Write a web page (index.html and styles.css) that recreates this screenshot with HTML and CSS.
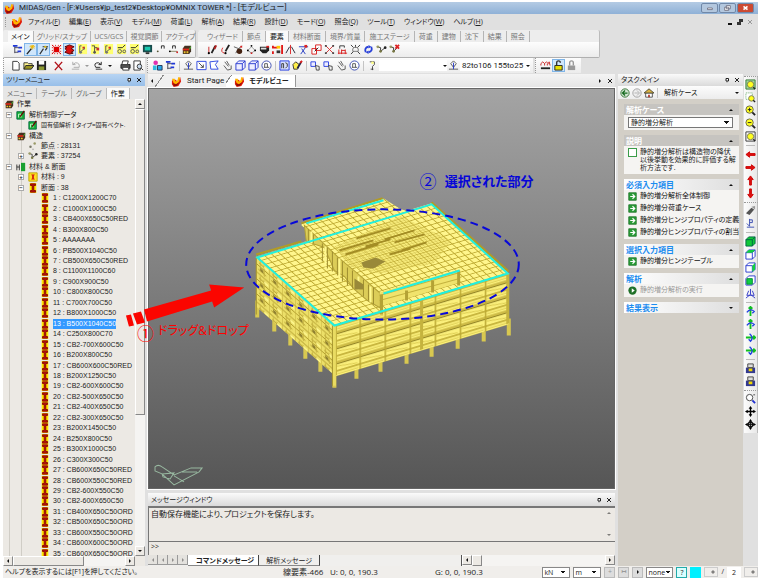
FILE: index.html
```html
<!DOCTYPE html>
<html lang="ja">
<head>
  <meta charset="UTF-8">
  <meta name="viewport" content="width=device-width, initial-scale=1.0">
  <title>MIDAS/Gen</title>
  <link rel="stylesheet" href="styles.css">
</head>
<body>

<svg class="sprite" aria-hidden="true">
  <symbol id="logo" viewBox="0 0 12 12"><path d="M1 5l4-1 2 2 3-5 1 5-3 5-5 1-2-3z" fill="#e01808"/><path d="M1 3l3 0 1 3 2-1 1-4 2 1-1 4-3 3-3-1z" fill="#ffb400"/><path d="M2 8l3 1 4-2-3 4H3z" fill="#901008"/></symbol>
  <symbol id="tree" viewBox="0 0 12 12"><path d="M3 2v8M3 4h5M3 9h4" stroke="#445" fill="none"/><path d="M1 1h5v2H1zM7 3h4v2H7zM6 7h4v2H6z" fill="#2038d8"/></symbol>
  <symbol id="wand" viewBox="0 0 12 12"><path d="M2 11l5-6" stroke="#222" stroke-width="1.5"/><path d="M8 1v5M5 3h6M6 1l4 4M10 1L6 5" stroke="#f0b800"/></symbol>
  <symbol id="wand2" viewBox="0 0 12 12"><path d="M2 11l4-6M8 7l2-3M5 3h6" stroke="#333" stroke-width="1.3"/><path d="M7 2h2v2H7z" fill="#e8c000"/></symbol>
  <symbol id="select" viewBox="0 0 12 12"><path d="M3 3h6v6H3z" fill="#d00"/><path d="M1 1l2 2M11 1L9 3M1 11l2-2M11 11L9 9" stroke="#d00"/><path d="M1.500 1.500h9v9h-9z" fill="none" stroke="#d00" stroke-dasharray="1 2"/></symbol>
  <symbol id="stack" viewBox="0 0 12 12"><path d="M1 3l5-2 5 2-3 2 3 2-3 2 2 1-4 1-5-2 2-2-2-2 2-1z" fill="#d81010" stroke="#500"/></symbol>
  <symbol id="node-y" viewBox="0 0 12 12"><path d="M1 0h10v11H1z" fill="#ffff70"/><path d="M3 2v7l5-4M3 2l2 0M8 3v3" stroke="#555" fill="none"/><path d="M6 3h2v2H6z" fill="#d22"/><circle cx="4" cy="9" r="1.500" fill="#777"/></symbol>
  <symbol id="node-t" viewBox="0 0 12 12"><path d="M1 0h9v11H1z" fill="#ffff70"/><path d="M2 2h3v2h3M5 4v6" stroke="#444" fill="none"/><path d="M7 4h3v3H7z" fill="#c83030"/><circle cx="5" cy="9" r="1.500" fill="#555"/></symbol>
  <symbol id="elem-y" viewBox="0 0 12 12"><path d="M1 0h10v11H1z" fill="#ffff70"/><circle cx="4" cy="8" r="2" fill="none" stroke="#555"/><circle cx="9" cy="8" r="1.500" fill="none" stroke="#555"/><path d="M2 4h5l3-3" stroke="#222" fill="none"/></symbol>
  <symbol id="monitor" viewBox="0 0 12 12"><path d="M1 1h10v8H1z" fill="#174b4b"/><path d="M3 3h6v4H3z" fill="#18c8b0"/><path d="M4 9h4v2H4z" fill="#333"/></symbol>
  <symbol id="num" viewBox="0 0 12 12"><path d="M7 5V2h3v3" fill="none" stroke="#222"/><circle cx="3" cy="8" r="1" fill="#553"/></symbol>
  <symbol id="num2" viewBox="0 0 12 12"><path d="M5 5V2h3v3" fill="none" stroke="#222"/><path d="M2 8h8" stroke="#886"/><circle cx="2" cy="8" r="1"/><circle cx="10" cy="9" r="1" fill="#c22"/></symbol>
  <symbol id="house" viewBox="0 0 12 12"><path d="M2 5l2-3h7v6l-2 3H2z" fill="#432"/><path d="M2 5h7v2H2z" fill="#e02818"/><path d="M3 8h2v2H3zM6 8h2v2H6z" fill="#f0c030"/><path d="M9 5l2-3v2L9 7z" fill="#4aa030"/></symbol>
  <symbol id="pen" viewBox="0 0 12 12"><path d="M2 3v7" stroke="#c22"/><path d="M5 10l4-8" stroke="#222" stroke-width="2"/><circle cx="2" cy="10" r="1.200"/><path d="M7 5l2-4 2 1-2 4z" fill="#b02020"/></symbol>
  <symbol id="pen2" viewBox="0 0 12 12"><path d="M3 4q-3 5 2 6" stroke="#d22" fill="none"/><path d="M6 8l4-7" stroke="#222" stroke-width="2"/><circle cx="6" cy="10" r="1.200"/></symbol>
  <symbol id="bug" viewBox="0 0 12 12"><path d="M1 3l5 2 4-3M6 5l-3 5" stroke="#555" fill="none"/><circle cx="7" cy="8" r="3" fill="#421"/><path d="M8 2h2v2H8z" fill="#d22"/></symbol>
  <symbol id="dots" viewBox="0 0 12 12"><path d="M2 7l4-4 4 4-4 3z" fill="none" stroke="#999"/><circle cx="2" cy="7" r="1"/><circle cx="6" cy="2" r="1"/><circle cx="10" cy="7" r="1"/><circle cx="6" cy="10" r="1" fill="#c22"/></symbol>
  <symbol id="link" viewBox="0 0 12 12"><path d="M1 3l4 1v4l5-4" stroke="#333" fill="none"/><circle cx="2" cy="3" r="1.500" fill="#996"/><circle cx="5" cy="8" r="1.500" fill="#774"/><circle cx="10" cy="4" r="1.500" fill="#222"/></symbol>
  <symbol id="linkred" viewBox="0 0 12 12"><path d="M1 3l4 1v4l4-4" stroke="#333" fill="none"/><circle cx="2" cy="3" r="1.500" fill="#996"/><circle cx="5" cy="8" r="1.500" fill="#774"/><path d="M7 1l4 4M11 1L7 5" stroke="#d22" stroke-width="2"/></symbol>
  <symbol id="solid" viewBox="0 0 12 12"><path d="M1 3h10v4l-3 3H4L1 7z" fill="#222"/><path d="M2 4h6v2H2z" fill="#ddd"/><path d="M8 2h3v2H8z" fill="#d22"/></symbol>
  <symbol id="divide" viewBox="0 0 12 12"><path d="M1 2v3M1 8v3M11 1v10M1 4h5" stroke="#e01818" stroke-width="2"/><path d="M5 2h4v3H5z" fill="#ffc800"/><path d="M5 7h4v3H5z" fill="#333"/></symbol>
  <symbol id="mirror" viewBox="0 0 12 12"><path d="M6 1v10" stroke="#d22"/><path d="M5 3L1 10M7 3l4 7" stroke="#223"/></symbol>
  <symbol id="cut" viewBox="0 0 12 12"><path d="M1 3h10M4 5l4 6M8 4l-5 7" stroke="#2036c0"/><path d="M7 1h3v3H7z" fill="#d22"/></symbol>
  <symbol id="boxes" viewBox="0 0 12 12"><path d="M5 1h6v6H5zM1 5h5v6H1z" fill="#fff" stroke="#d81818"/><path d="M4 8l4-4" stroke="#222"/></symbol>
  <symbol id="cross" viewBox="0 0 12 12"><path d="M2 2l8 8M10 2l-8 8" stroke="#d83030"/><path d="M1 1h2v2H1zM9 1h2v2H9zM1 9h2v2H1zM9 9h2v2H9z" fill="#444"/></symbol>
  <symbol id="steps" viewBox="0 0 12 12"><path d="M3 5V2h5v2" stroke="#333" fill="none"/><path d="M2 6v5M5 6v5M9 6v5M1 10h10M5 7h4" stroke="#d81818"/></symbol>
  <symbol id="burst" viewBox="0 0 12 12"><path d="M1 1l3 3M11 1L8 4M1 11l3-3M11 11L8 8M6 1v3" stroke="#333"/><path d="M3 5l3-2 3 2v3H3z" fill="none" stroke="#777"/></symbol>
  <symbol id="swap" viewBox="0 0 12 12"><path d="M3 9Q1 4 6 3M9 3q2 5-3 6" fill="none" stroke="#2840d8" stroke-width="2"/><path d="M6 1l3 2-3 2zM6 7L3 9l3 2z" fill="#2840d8"/></symbol>
  <symbol id="new" viewBox="0 0 12 12"><path d="M3 1.500h5l2 2V11H3z" fill="#fff" stroke="#333"/></symbol>
  <symbol id="open" viewBox="0 0 12 12"><path d="M1 10V3h4l1 1h4v2" fill="#fff490" stroke="#333"/><path d="M1 10l2-4h9l-3 4z" fill="#9a9420" stroke="#222"/></symbol>
  <symbol id="save" viewBox="0 0 12 12"><path d="M1 1h10v10H1z" fill="#222"/><path d="M3 1h6v4H3z" fill="#fff"/><path d="M3 7h6v4H3z" fill="#8a9830"/></symbol>
  <symbol id="delete" viewBox="0 0 12 12"><path d="M2 2l8 9M10 2l-8 9" stroke="#b01018" stroke-width="1.500"/></symbol>
  <symbol id="undo" viewBox="0 0 12 12"><path d="M4 8h6q1-5-4-5L3 5M3 2v3h3M2 10h8" fill="none" stroke="#aaa"/></symbol>
  <symbol id="redo" viewBox="0 0 12 12"><path d="M8 8H3Q0 3 6 3l3 2M9 2v3H6M3 10h7" fill="none" stroke="#222"/></symbol>
  <symbol id="print" viewBox="0 0 12 12"><path d="M1 5h10v4H1z" fill="#555" stroke="#222"/><path d="M3 1h6l-1 4H2zM3 8h6l1 3H3z" fill="#fff" stroke="#333"/></symbol>
  <symbol id="preview" viewBox="0 0 12 12"><path d="M1 1h7v10H1z" fill="#fff" stroke="#333"/><circle cx="7" cy="7" r="2.500" fill="#cde" stroke="#333"/><path d="M9 9l2 2" stroke="#222"/></symbol>
  <symbol id="group" viewBox="0 0 12 12"><circle cx="4" cy="3" r="2.500" fill="#e030b0"/><path d="M1 6h4v5H1z" fill="#30b8e0"/><path d="M6 6h5v5H6z" fill="#28a8e8" stroke="#235"/></symbol>
  <symbol id="pick" viewBox="0 0 12 12"><path d="M3 4l3-3 3 3-3 4zM1 10h10" fill="none" stroke="#555"/><path d="M6 3v7" stroke="#2438c8"/></symbol>
  <symbol id="win" viewBox="0 0 12 12"><path d="M1 1.500h10v9H1z" fill="#fff" stroke="#2844e0"/><path d="M3 3l5 5M8 5v3H5" fill="none" stroke="#444"/></symbol>
  <symbol id="poly" viewBox="0 0 12 12"><path d="M1 2l9-1-3 4 3 5H2z" fill="#fff" stroke="#2844e0"/></symbol>
  <symbol id="hand" viewBox="0 0 12 12"><path d="M3 2l4 5M5 1l3 5M2 6l4 5 4-1V6" fill="none" stroke="#555"/></symbol>
  <symbol id="cube" viewBox="0 0 12 12"><path d="M1 4l3-3h7v7l-3 3H1zM1 4h7v7M8 4l3-3" fill="#eef" stroke="#2638d0"/></symbol>
  <symbol id="circ" viewBox="0 0 12 12"><circle cx="6" cy="6" r="5" fill="#fff" stroke="#3848b0"/><path d="M4 8V4h3v4M3 8h6" fill="none" stroke="#555"/></symbol>
  <symbol id="frame" viewBox="0 0 12 12"><path d="M1 1h10v10H1z" fill="#d8e0ff" stroke="#2038e0"/><path d="M3 9V4h2v5M7 3q3 0 2 4l-2 2" fill="none" stroke="#333"/></symbol>
  <symbol id="paint" viewBox="0 0 12 12"><path d="M1 5l3-3 4 3-2 5H2z" fill="#fff04a" stroke="#333"/><path d="M6 9l4-7" stroke="#224" stroke-width="2"/><path d="M9 3l2-2" stroke="#d22" stroke-width="2"/></symbol>
  <symbol id="pair" viewBox="0 0 12 12"><path d="M1 2h5v5H1z" fill="#eef" stroke="#2840e0"/><path d="M6 6l4 1v4H7z" fill="none" stroke="#444"/></symbol>
  <symbol id="bulb" viewBox="0 0 12 12"><path d="M3 2h5v3L6 7v4M4 10h3" stroke="#444" fill="none"/><circle cx="6" cy="3" r="1.500" fill="#ff8"/></symbol>
  <symbol id="wave" viewBox="0 0 12 12"><path d="M1 6V4l2-2 2 2 2-2 2 2 1-2 1 4M5 4v2M8 4v2" fill="none" stroke="#c82020"/><path d="M1 9h10" stroke="#222" stroke-width="2"/></symbol>
  <symbol id="unlock" viewBox="0 0 12 12"><path d="M4 6V3q0-2 2-2t2 2" fill="none" stroke="#333" stroke-width="1.500"/><path d="M2 6h8v5H2z" fill="#e8e000" stroke="#222"/></symbol>
  <symbol id="lock" viewBox="0 0 12 12"><path d="M4 6V3q0-2 2-2t2 2v3" fill="none" stroke="#999" stroke-width="1.500"/><path d="M2 6h8v5H2z" fill="#999"/></symbol>
  <symbol id="check" viewBox="0 0 12 12"><path d="M1 2h9v9H1z" fill="#18b038" stroke="#064"/><path d="M3 9V5h3v4" stroke="#dfd" fill="none"/><path d="M5 8l5-7" stroke="#600" stroke-width="1.500" fill="none"/></symbol>
  <symbol id="nodes" viewBox="0 0 12 12"><circle cx="3" cy="7" r="1.500" fill="#776"/><circle cx="8" cy="3" r="1.500" fill="#996"/><circle cx="6" cy="10" r="1" fill="#aaa"/></symbol>
  <symbol id="mat" viewBox="0 0 12 12"><path d="M1 3v7M4 3v7M1 6h3" stroke="#222"/><path d="M6 1h5v10H6z" fill="#18a030"/></symbol>
  <symbol id="isec" viewBox="0 0 12 12"><path d="M2 0h8v12H2z" fill="#ffe800"/><path d="M3 1h6v2H7v6h2v2H3V9h2V3H3z" fill="#b81010" stroke="#800"/></symbol>
  <symbol id="isec2" viewBox="0 0 12 12"><path d="M1 1h10v10H1z" fill="#ffe020" stroke="#b8a000"/><path d="M4 3h4v1H7v4h1v1H4V8h1V4H4z" fill="#d01010"/></symbol>
  <symbol id="zfit" viewBox="0 0 12 12"><path d="M1 1h10v10H1z" fill="#9fd89f" stroke="#377a37"/><circle cx="6" cy="6" r="3.500" fill="#ffff20" stroke="#775"/><path d="M9 9l2 2" stroke="#222" stroke-width="1.500"/></symbol>
  <symbol id="zall" viewBox="0 0 12 12"><path d="M1 1h10v10H1z" fill="#fff" stroke="#333"/><circle cx="6" cy="6" r="3.500" fill="#ffff20" stroke="#775"/><path d="M9 9l2 2" stroke="#222" stroke-width="1.500"/></symbol>
  <symbol id="zwin" viewBox="0 0 12 12"><path d="M1 1h7v7H1z" fill="#fff" stroke="#6a6" stroke-dasharray="1 1"/><circle cx="7" cy="7" r="3" fill="#ffff20" stroke="#775"/><path d="M9 9l2 2" stroke="#222" stroke-width="1.500"/></symbol>
  <symbol id="zin" viewBox="0 0 12 12"><circle cx="5" cy="5" r="4" fill="#ffff20" stroke="#664"/><path d="M3 5h4M5 3v4" stroke="#222"/><path d="M8 8l3 3" stroke="#222" stroke-width="2"/></symbol>
  <symbol id="zout" viewBox="0 0 12 12"><circle cx="5" cy="5" r="4" fill="#ffff20" stroke="#664"/><path d="M3 5h4" stroke="#222"/><path d="M8 8l3 3" stroke="#222" stroke-width="2"/></symbol>
  <symbol id="arrow" viewBox="0 0 12 12"><path d="M1 6l4-3v2h6v2H5v2z" fill="#e01010" stroke="#c00"/></symbol>
  <symbol id="camera" viewBox="0 0 12 12"><path d="M1 9l6-6 3 2-5 6z" fill="#555"/><path d="M7 2l4-1v4z" fill="#999"/></symbol>
  <symbol id="flag" viewBox="0 0 12 12"><path d="M5 1v8M5 2h3v3H5M2 10h8M5 9l-3-3" stroke="#3548b0" fill="none"/></symbol>
  <symbol id="gtop" viewBox="0 0 12 12"><path d="M1 4l3-3h7v7l-3 3H1zM1 4h7v7M8 4l3-3" fill="#fff" stroke="#2638d0"/><path d="M1 4l3-3h7L8 4z" fill="#10d040"/></symbol>
  <symbol id="gside" viewBox="0 0 12 12"><path d="M1 4l3-3h7v7l-3 3H1zM1 4h7v7" fill="#fff" stroke="#2638d0"/><path d="M8 4l3-3v7l-3 3z" fill="#10d040"/></symbol>
  <symbol id="gfront" viewBox="0 0 12 12"><path d="M1 4l3-3h7v7l-3 3H1z" fill="#fff" stroke="#2638d0"/><path d="M2 4h6v6H2z" fill="#10d040" stroke="#083"/></symbol>
  <symbol id="gcube" viewBox="0 0 12 12"><path d="M1 4l3-3h7v7l-3 3H1z" fill="#10c838" stroke="#064"/><path d="M1 4h7v7M8 4l3-3" fill="none" stroke="#064"/></symbol>
  <symbol id="axis" viewBox="0 0 12 12"><path d="M6 1v6L1 11M6 7l5 4M4 3L2 8h8L8 3" fill="none" stroke="#3038c8"/></symbol>
  <symbol id="rot" viewBox="0 0 12 12"><path d="M6 1v10M4 3l2-2 2 2" stroke="#10c020" stroke-width="2" fill="none"/><path d="M2 7q4-5 8-1L8 8" fill="none" stroke="#2040e0" stroke-width="1.500"/></symbol>
  <symbol id="cam2" viewBox="0 0 12 12"><path d="M1 5h10v6H1z" fill="#333a90"/><path d="M3 1h6v4H3z" fill="#ddd" stroke="#444"/><path d="M4 6h4v3H4z" fill="#f0d800"/></symbol>
  <symbol id="mag" viewBox="0 0 12 12"><circle cx="5" cy="5" r="3.500" fill="#fff" stroke="#444"/><path d="M8 8l3 3" stroke="#2030d0" stroke-width="2"/><path d="M9 2h2" stroke="#444"/></symbol>
  <symbol id="move" viewBox="0 0 12 12"><path d="M6 0l2 3H4zM6 12l2-3H4zM0 6l3-2v4zM12 6L9 4v4z"/><path d="M6 2v8M2 6h8" stroke="#000" stroke-width="1.500"/></symbol>
  <symbol id="orbit" viewBox="0 0 12 12"><path d="M6 0l2 3H4zM6 12l2-3H4zM0 6l3-2v4zM12 6L9 4v4z"/><path d="M6 2v8M2 6h8" stroke="#111"/><circle cx="6" cy="6" r="2.500" fill="none" stroke="#111" stroke-width="1.500"/></symbol>
  <symbol id="go" viewBox="0 0 12 12"><path d="M1 1h10v10H1z" fill="#2b9c38" stroke="#157020"/><path d="M3 6h5M6 3l3 3-3 3" stroke="#fff" stroke-width="1.500" fill="none"/></symbol>
  <symbol id="run" viewBox="0 0 12 12"><circle cx="6" cy="6" r="5.500" fill="#1f7028"/><path d="M5 3l4 3-4 3z" fill="#fff"/></symbol>
  <symbol id="back" viewBox="0 0 12 12"><circle cx="6" cy="6" r="5" fill="#cfe4cf" stroke="#2a6a2a"/><path d="M9 6H4M6 3L3 6l3 3" stroke="#176a20" stroke-width="1.500" fill="none"/></symbol>
  <symbol id="fwd" viewBox="0 0 12 12"><circle cx="6" cy="6" r="5" fill="#eee" stroke="#999"/><path d="M3 6h5M6 3l3 3-3 3" stroke="#aaa" fill="none"/></symbol>
  <symbol id="home" viewBox="0 0 12 12"><path d="M2 6h8v5H2z" fill="#fff" stroke="#444"/><path d="M0 6l6-5 6 5z" fill="#d8b040" stroke="#443"/><path d="M5 8h2v3H5z" fill="#b03020"/></symbol>
  <symbol id="pin" viewBox="0 0 12 12"><path d="M4 3h5v5H4z" fill="#fff" stroke="#222" stroke-width="2"/><path d="M6 8v3" stroke="#222"/></symbol>
  <symbol id="close" viewBox="0 0 12 12"><path d="M2 2l8 8M10 2l-8 8" stroke="#222" stroke-width="2"/></symbol>
</svg>

<div class="app">
  <header class="titlebar">
    <svg class="icon"><use href="#logo"/></svg>
    <h1>MIDAS/Gen - [F:¥Users¥jp_test2¥Desktop¥OMNIX TOWER *] - [モデルビュー]</h1>
    <div class="window-buttons">
      <button aria-label="最小化"><svg viewBox="0 0 17 10"><path d="M6 5h6v2H6z" fill="#fff" stroke="#667"/></svg></button>
      <button aria-label="元に戻す"><svg viewBox="0 0 17 10"><path d="M7 2h5v4H7zM5 4h5v4H5z" fill="#fff" stroke="#667"/></svg></button>
      <button class="quit" aria-label="閉じる"><svg viewBox="0 0 17 10"><path d="M6 3l5 4M11 3L6 7" stroke="#fff" stroke-width="2"/></svg></button>
    </div>
  </header>

  <nav class="menubar">
    <span class="grip"></span>
    <svg class="icon"><use href="#logo"/></svg>
    <button>ファイル(<u>F</u>)</button>
    <button>編集(<u>E</u>)</button>
    <button>表示(<u>V</u>)</button>
    <button>モデル(<u>M</u>)</button>
    <button>荷重(<u>L</u>)</button>
    <button>解析(<u>A</u>)</button>
    <button>結果(<u>R</u>)</button>
    <button>設計(<u>D</u>)</button>
    <button>モード(<u>O</u>)</button>
    <button>照会(<u>Q</u>)</button>
    <button>ツール(<u>T</u>)</button>
    <button>ウィンドウ(<u>W</u>)</button>
    <button>ヘルプ(<u>H</u>)</button>
    <div class="doc-buttons">
      <svg viewBox="0 0 6 8"><path d="M1 6h4" stroke="#111" stroke-width="2"/></svg>
      <svg viewBox="0 0 6 8"><path d="M2 1h4v3H2zM0 4h4v3H0z" fill="#333"/></svg>
      <svg viewBox="0 0 6 8"><path d="M1 2l4 4M5 2L1 6" stroke="#999"/></svg>
    </div>
  </nav>

  <div class="ribbons">
    <section class="ribbon ribbon-main">
      <div class="ribbon-tabs">
        <button class="on">メイン</button><button>グリッド/スナップ</button><button>UCS/GCS</button><button>視覚調節</button><button>アクティブ</button>
      </div>
      <div class="tools">
        <svg class="icon"><use href="#tree"/></svg><svg class="icon lit"><use href="#wand"/></svg><svg class="icon lit"><use href="#wand2"/></svg><svg class="icon"><use href="#select"/></svg><svg class="icon lit"><use href="#stack"/></svg><svg class="icon"><use href="#node-y"/></svg><svg class="icon"><use href="#node-t"/></svg><svg class="icon"><use href="#node-y"/></svg><svg class="icon"><use href="#elem-y"/></svg><svg class="icon"><use href="#elem-y"/></svg><svg class="icon"><use href="#monitor"/></svg><svg class="icon"><use href="#num"/></svg><svg class="icon"><use href="#num2"/></svg><svg class="icon"><use href="#house"/></svg>
      </div>
    </section>
    <section class="ribbon ribbon-model">
      <div class="ribbon-tabs">
        <button>ウィザード</button><button>節点</button><button class="on">要素</button><button>材料断面</button><button>境界/質量</button><button>施工ステージ</button><button>荷重</button><button>建物</button><button>沈下</button><button>結果</button><button>照会</button>
      </div>
      <div class="tools">
        <svg class="icon"><use href="#pen"/></svg><svg class="icon"><use href="#pen2"/></svg><svg class="icon"><use href="#bug"/></svg><svg class="icon"><use href="#dots"/></svg><svg class="icon"><use href="#solid"/></svg><svg class="icon"><use href="#divide"/></svg><svg class="icon"><use href="#mirror"/></svg><svg class="icon"><use href="#cut"/></svg><svg class="icon"><use href="#boxes"/></svg><svg class="icon"><use href="#cross"/></svg><svg class="icon"><use href="#steps"/></svg><svg class="icon"><use href="#burst"/></svg><svg class="icon"><use href="#swap"/></svg><svg class="icon"><use href="#link"/></svg><svg class="icon"><use href="#linkred"/></svg>
      </div>
    </section>
  </div>

  <div class="toolbar">
    <div class="tools tools-file">
      <svg class="icon"><use href="#new"/></svg><svg class="icon"><use href="#open"/></svg><svg class="icon"><use href="#save"/></svg><i class="sep"></i><svg class="icon"><use href="#delete"/></svg><i class="sep"></i><svg class="icon"><use href="#undo"/></svg><i class="caret dim"></i><svg class="icon"><use href="#redo"/></svg><i class="caret"></i><i class="sep"></i><svg class="icon"><use href="#print"/></svg><svg class="icon"><use href="#preview"/></svg>
    </div>
    <div class="tools tools-select">
      <svg class="icon"><use href="#group"/></svg><svg class="icon"><use href="#tree"/></svg><i class="sep"></i><svg class="icon"><use href="#pick"/></svg><svg class="icon"><use href="#win"/></svg><svg class="icon"><use href="#poly"/></svg><svg class="icon"><use href="#hand"/></svg><svg class="icon"><use href="#cube"/></svg><svg class="icon"><use href="#cube"/></svg><svg class="icon"><use href="#circ"/></svg><i class="sep"></i><svg class="icon"><use href="#frame"/></svg><svg class="icon"><use href="#paint"/></svg><i class="sep"></i><svg class="icon"><use href="#pair"/></svg><svg class="icon"><use href="#pair"/></svg><svg class="icon"><use href="#hand"/></svg><svg class="icon"><use href="#circ"/></svg><i class="sep"></i><svg class="icon"><use href="#bulb"/></svg>
      <span class="combo node-combo"><i class="caret"></i></span>
      <svg class="icon"><use href="#pick"/></svg>
      <span class="combo elem-combo">82to106 155to25<i class="caret"></i></span>
    </div>
    <div class="tools">
      <svg class="icon"><use href="#wave"/></svg><svg class="icon lit"><use href="#unlock"/></svg><svg class="icon"><use href="#lock"/></svg>
    </div>
  </div>

  <main class="workspace">
    <aside class="tree-panel">
      <div class="panel-head active"><h2>ツリーメニュー</h2><svg><use href="#pin"/></svg><svg><use href="#close"/></svg></div>
      <div class="tree-tabs"><button>メニュー</button><button>テーブル</button><button>グループ</button><button class="on">作業</button></div>
      <div class="tree-box">
        <div class="tree-clip">
          <ul class="tree">
            <li class="l0"><svg><use href="#house"/></svg>作業</li>
            <li class="l1"><b>−</b><svg><use href="#check"/></svg>解析制御データ</li>
            <li class="l2 long"><b class="none"></b><svg><use href="#check"/></svg>固有値解析 [ タイプ=固有ベクト.</li>
            <li class="l1"><b>−</b><svg><use href="#house"/></svg>構造</li>
            <li class="l2"><b class="none"></b><svg><use href="#nodes"/></svg>節点 : 28131</li>
            <li class="l2"><b>+</b><svg><use href="#link"/></svg>要素 : 37254</li>
            <li class="l1"><b>−</b><svg><use href="#mat"/></svg>材料 &amp; 断面</li>
            <li class="l2"><b>+</b><svg><use href="#isec2"/></svg>材料 : 9</li>
            <li class="l2"><b>−</b><svg><use href="#isec"/></svg>断面 : 38</li>
            <li class="l3"><svg><use href="#isec"/></svg><span>1 : C1200X1200C70</span></li>
            <li class="l3"><svg><use href="#isec"/></svg><span>2 : C1000X1000C50</span></li>
            <li class="l3"><svg><use href="#isec"/></svg><span>3 : CB400X650C50RED</span></li>
            <li class="l3"><svg><use href="#isec"/></svg><span>4 : B300X800C50</span></li>
            <li class="l3"><svg><use href="#isec"/></svg><span>5 : AAAAAAA</span></li>
            <li class="l3"><svg><use href="#isec"/></svg><span>6 : PB500X1040C50</span></li>
            <li class="l3"><svg><use href="#isec"/></svg><span>7 : CB500X650C50RED</span></li>
            <li class="l3"><svg><use href="#isec"/></svg><span>8 : C1100X1100C60</span></li>
            <li class="l3"><svg><use href="#isec"/></svg><span>9 : C900X900C50</span></li>
            <li class="l3"><svg><use href="#isec"/></svg><span>10 : C800X800C50</span></li>
            <li class="l3"><svg><use href="#isec"/></svg><span>11 : C700X700C50</span></li>
            <li class="l3"><svg><use href="#isec"/></svg><span>12 : B800X1000C50</span></li>
            <li class="l3"><svg><use href="#isec"/></svg><span class="picked">13 : B500X1040C50</span></li>
            <li class="l3"><svg><use href="#isec"/></svg><span>14 : C250X800C70</span></li>
            <li class="l3"><svg><use href="#isec"/></svg><span>15 : CB2-700X600C50</span></li>
            <li class="l3"><svg><use href="#isec"/></svg><span>16 : B200X800C50</span></li>
            <li class="l3"><svg><use href="#isec"/></svg><span>17 : CB600X600C50RED</span></li>
            <li class="l3"><svg><use href="#isec"/></svg><span>18 : B200X1250C50</span></li>
            <li class="l3"><svg><use href="#isec"/></svg><span>19 : CB2-600X600C50</span></li>
            <li class="l3"><svg><use href="#isec"/></svg><span>20 : CB2-500X650C50</span></li>
            <li class="l3"><svg><use href="#isec"/></svg><span>21 : CB2-400X650C50</span></li>
            <li class="l3"><svg><use href="#isec"/></svg><span>22 : CB2-300X650C50</span></li>
            <li class="l3"><svg><use href="#isec"/></svg><span>23 : B200X1450C50</span></li>
            <li class="l3"><svg><use href="#isec"/></svg><span>24 : B250X800C50</span></li>
            <li class="l3"><svg><use href="#isec"/></svg><span>25 : B300X1000C50</span></li>
            <li class="l3"><svg><use href="#isec"/></svg><span>26 : C300X300C50</span></li>
            <li class="l3"><svg><use href="#isec"/></svg><span>27 : CB600X650C50RED</span></li>
            <li class="l3"><svg><use href="#isec"/></svg><span>28 : CB600X550C50RED</span></li>
            <li class="l3"><svg><use href="#isec"/></svg><span>29 : CB2-600X550C50</span></li>
            <li class="l3"><svg><use href="#isec"/></svg><span>30 : CB2-600X650C50</span></li>
            <li class="l3"><svg><use href="#isec"/></svg><span>31 : CB400X650C50ORD</span></li>
            <li class="l3"><svg><use href="#isec"/></svg><span>32 : CB500X650C50ORD</span></li>
            <li class="l3"><svg><use href="#isec"/></svg><span>33 : CB600X550C50ORD</span></li>
            <li class="l3"><svg><use href="#isec"/></svg><span>34 : CB600X600C50ORD</span></li>
            <li class="l3"><svg><use href="#isec"/></svg><span>35 : CB600X650C50ORD</span></li>
          </ul>
        </div>
        <div class="vscroll"><button aria-label="上へ"><i class="tri up"></i></button><span class="thumb"></span><button class="end" aria-label="下へ"><i class="tri down"></i></button></div>
        <div class="hscroll"><button aria-label="左へ"><i class="tri left"></i></button><span class="thumb"></span><button class="end" aria-label="右へ"><i class="tri right"></i></button></div>
      </div>
    </aside>

    <section class="center">
      <div class="doc-tabs">
        <i class="tri left"></i>
        <button class="doc-tab"><svg class="icon"><use href="#logo"/></svg>Start Page</button>
        <button class="doc-tab on"><svg class="icon"><use href="#logo"/></svg>モデルビュー</button>
        <div class="doc-tabs-end"><i class="tri right"></i><svg><use href="#close"/></svg></div>
      </div>
      <div class="viewport">
        <svg class="model" viewBox="150 89 464 398">
          <defs>
            <pattern id="roof" width="1" height="1" patternUnits="userSpaceOnUse" patternTransform="matrix(6.5 -1.95 4.3 3.8 257 256)">
              <path d="M0 0H1V1H0z" fill="#fff68c"/><path d="M0 0H1M0 0V1" stroke="#bfab34" stroke-width=".3"/>
            </pattern>
            <pattern id="core" width="1" height="1" patternUnits="userSpaceOnUse" patternTransform="matrix(3.2 -.95 2.1 1.9 257 256)">
              <path d="M0 0H1V1H0z" fill="#f3e670"/><path d="M0 0H1M0 0V1" stroke="#b5a02e" stroke-width=".35"/>
            </pattern>
            <pattern id="front" width="25" height="15" patternUnits="userSpaceOnUse">
              <path d="M0 0h25v15H0z" fill="#fbf07c"/><path d="M0 0h25v2H0z" fill="#c9b740"/><path d="M0 6h25v3H0z" fill="#cdbb46"/><path d="M0 9h25" stroke="#8f8024"/><path d="M0 0v15" stroke="#bba832" stroke-width="3"/><path d="M1 11l22 3M2 4h22" stroke="#dccb50"/>
            </pattern>
            <pattern id="side" width="13" height="15" patternUnits="userSpaceOnUse">
              <path d="M0 0h13v15H0z" fill="#ecdf68"/><path d="M0 1h13M0 8h13M3 5h7M2 12h8" stroke="#b09c2c"/><path d="M0 0v15M4 2v9M8 3v11" stroke="#c5b240"/><path d="M4 9h3v3H4z" fill="#8f8030"/><path d="M8 4h4v2H8z" fill="#fff890"/>
            </pattern>
          </defs>

          <!-- columns below the lowest floor -->
          <path d="M258 300v17M275 320v11M291 333v12M306 346v12M321 360v11M335 370v17M357 366v12M381 360v11M407 352v11M432 345v11M458 336v12M484 330v11M509 318v17" stroke="#d8c850" stroke-width="4"/>
          <path d="M257 256L335 325V374L257 306z" fill="#d8c850"/>
          <g transform="matrix(1 .88 0 1 257 255)"><path d="M0 0h78v51H0z" fill="url(#side)"/></g>
          <g transform="matrix(1 -.3 0 1 335 325)"><path d="M0 0h174v51H0z" fill="url(#front)"/><path d="M1 0v50M87 0v50M173 0v50" stroke="#c5b33e" stroke-width="3"/></g>
          <path d="M335 325v60" stroke="#e9dc62" stroke-width="3"/>
          <path d="M333 325v60M257 256v58" stroke="#a4932e"/>

          <!-- roof and penthouse -->
          <path d="M302 224L307 222 384 198 401 209 389 216 316 238z" fill="url(#roof)"/>
          <path d="M257 256L432 203 509 273 335 325z" fill="url(#roof)"/>
          <path d="M302 225L379 292 460 268 470 256 441 218 401 209 383 199z" fill="url(#roof)"/>
          <path d="M335 246L401 216 452 240 434 263 380 273 350 266z" fill="url(#core)" opacity=".6"/>
          <path d="M305 225L320 239 340 258 358 273 380 292V307L368 300 355 289 345 276 335 270 325 247 307 241z" fill="#dccd58" stroke="#b4a236"/>
          <path d="M309 229v13M314 234v9M323 243v18M328 247v21M333 251v20M338 257v18M343 261v20M348 267v18M353 270v18M364 279v17M369 284v16M374 287v17" stroke="#9f8e30"/>
          <path d="M312 231v12M326 246v20M340 258v20M359 276v13M371 286v16" stroke="#fff890" stroke-width="2"/>
          <path d="M362 262l14-5 10 4-12 7-10-1zM355 278l9 6v5h-9z" fill="#998939"/>
          <path d="M340 250l34-10M346 254l33-10M357 238l34-10M385 239l30-9M395 242l30-8M402 250l25-8M390 254l21-6M366 246l25-7" stroke="#a38d25" stroke-width="2"/>
          <path d="M380 292L460 269V282L380 306z" fill="#f0e36c"/>
          <path d="M380 295l80-23M380 300l80-22" stroke="#c4b23e"/>
          <path d="M382 294v20M407 290v10M433 280v12M459 270v15" stroke="#b4a235" stroke-width="3"/>
          <path d="M257 254l45-13M302 223l81-25M432 202l77 69" stroke="#b29c24" stroke-width="2" fill="none"/>
          <path d="M258 257L403 213 432 204 508 273 335 325zM307 223L384 200M384 293L460 270" fill="none" stroke="#20f0e0" stroke-width="2"/>

          <!-- ucs icon -->
          <path d="M156 466q3-3 7 0l12 8 17-7h11l-3 4-25 13-12-11-7-3zM163 473l12-1-4 6-7-2zM175 475l10 6M183 471l15 0" fill="none" stroke="#98b8a0"/>

          <!-- annotations -->
          <ellipse cx="383" cy="264" rx="136" ry="55" fill="none" stroke="#0808d8" stroke-width="2" stroke-dasharray="8 5"/>
          <text class="note-blue" x="420" y="188">②</text>
          <text class="note-blue bold" x="445" y="186">選択された部分</text>
          <path d="M127 315l5-1 3 11-5 1zM134 313l8-2 4 11-8 2zM145 309l67-19-2-6 35 3-30 20-2-6-65 20z" fill="#fb0500"/>
          <text class="note-red" x="138" y="339">①</text>
          <text class="note-red small" x="159" y="334">ドラッグ&amp;ドロップ</text>
        </svg>
      </div>
      <div class="message-panel">
        <div class="panel-head"><h2>メッセージウィンドウ</h2><svg><use href="#pin"/></svg><svg><use href="#close"/></svg></div>
        <div class="message-log"><p>自動保存機能により、プロジェクトを保存します。</p><span class="faint-scroll"><i class="tri up"></i><i class="tri down"></i></span></div>
        <div class="prompt">&gt;&gt;</div>
        <div class="sheet-tabs">
          <span class="nav"><i class="tri left"></i></span><span class="nav"><i class="tri left"></i></span><span class="nav"><i class="tri right"></i></span><span class="nav"><i class="tri right"></i></span>
          <button class="sheet on">コマンドメッセージ</button><button class="sheet">解析メッセージ</button>
          <div class="hscroll"><button aria-label="左へ"><i class="tri left"></i></button><span class="thumb"></span><button class="end" aria-label="右へ"><i class="tri right"></i></button></div>
        </div>
      </div>
    </section>

    <aside class="task-panel">
      <div class="panel-head"><h2>タスクペイン</h2><svg><use href="#pin"/></svg><svg><use href="#close"/></svg></div>
      <div class="task-nav"><svg class="icon"><use href="#back"/></svg><svg class="icon"><use href="#fwd"/></svg><svg class="icon"><use href="#home"/></svg><i class="sep"></i><span>解析ケース</span><i class="caret"></i></div>
      <div class="task-body">
        <section class="card gray">
          <h3>解析ケース<i class="tri up"></i></h3>
          <div class="card-in"><select aria-label="解析ケース"><option>静的増分解析</option></select></div>
        </section>
        <section class="card gray">
          <h3>説明<i class="tri up"></i></h3>
          <div class="card-in about"><i class="box"></i><p>静的増分解析は構造物の降伏<br>以後挙動を効果的に評価する解<br>析方法です.</p></div>
        </section>
        <section class="card">
          <h3>必須入力項目<i class="tri up"></i></h3>
          <ul>
            <li><svg><use href="#go"/></svg><a href="#">静的増分解析全体制御</a></li>
            <li><svg><use href="#go"/></svg><a href="#">静的増分荷重ケース</a></li>
            <li><svg><use href="#go"/></svg><a href="#">静的増分ヒンジプロパティの定義</a></li>
            <li><svg><use href="#go"/></svg><a href="#">静的増分ヒンジプロパティの割当</a></li>
          </ul>
        </section>
        <section class="card">
          <h3>選択入力項目<i class="tri up"></i></h3>
          <ul><li><svg><use href="#go"/></svg><a href="#">静的増分ヒンジテーブル</a></li></ul>
        </section>
        <section class="card">
          <h3>解析<i class="tri up"></i></h3>
          <ul><li class="off"><svg><use href="#run"/></svg><a href="#">静的増分解析の実行</a></li></ul>
        </section>
        <section class="card">
          <h3>結果表示<i class="tri down"></i></h3>
        </section>
      </div>
    </aside>

    <div class="side-tools">
      <div class="side-group">
        <svg class="icon"><use href="#zfit"/></svg><svg class="icon"><use href="#zwin"/></svg><svg class="icon"><use href="#zin"/></svg><svg class="icon"><use href="#zout"/></svg><svg class="icon"><use href="#zall"/></svg><i class="bar"></i><svg class="icon"><use href="#arrow"/></svg><svg class="icon r180"><use href="#arrow"/></svg><svg class="icon r90"><use href="#arrow"/></svg><svg class="icon r270"><use href="#arrow"/></svg>
      </div>
      <div class="side-group">
        <svg class="icon"><use href="#camera"/></svg><svg class="icon"><use href="#flag"/></svg><i class="bar"></i><svg class="icon"><use href="#gcube"/></svg><svg class="icon"><use href="#gtop"/></svg><svg class="icon"><use href="#gside"/></svg><svg class="icon"><use href="#gfront"/></svg><svg class="icon"><use href="#axis"/></svg><i class="bar"></i><svg class="icon"><use href="#rot"/></svg><svg class="icon"><use href="#rot"/></svg><svg class="icon r90"><use href="#rot"/></svg><svg class="icon r90"><use href="#rot"/></svg><i class="bar"></i><svg class="icon"><use href="#cam2"/></svg><svg class="icon"><use href="#cam2"/></svg>
      </div>
      <div class="side-group">
        <svg class="icon"><use href="#mag"/></svg><svg class="icon"><use href="#move"/></svg><svg class="icon"><use href="#orbit"/></svg>
      </div>
    </div>
  </main>

  <footer class="statusbar">
    <span class="help">ヘルプを表示するには[F1]を押してください。</span>
    <span class="elem">線要素-466</span>
    <span class="ucs">U: 0, 0, 190.3</span>
    <span class="gcs">G: 0, 0, 190.3</span>
    <select class="unit" aria-label="力"><option>kN</option></select>
    <select class="unit" aria-label="長さ"><option>m</option></select>
    <button class="flat" aria-label="追加">+</button><button class="flat" aria-label="切替">∺</button><button class="flat" aria-label="再生"><i class="tri right"></i></button>
    <select class="mode" aria-label="フィルタ"><option>none</option></select>
    <button class="query">?</button><span class="cyan"></span>
    <span class="spin"><i class="tri up"></i><i class="tri down"></i></span><span>/</span><input class="count" value="2" aria-label="ページ"><span class="spin"><i class="tri up"></i><i class="tri down"></i></span>
  </footer>
</div>

</body>
</html>
```

FILE: styles.css
```css
* {
  box-sizing: border-box;
}

body {
  margin: 0;
  background: #fff;
  color: #222;
  font-family: "Open Sans", "Noto Sans CJK JP", sans-serif;
  font-size: 7px;
  line-height: 10px;
  font-feature-settings: "palt";
}

h1, h2, h3, p, ul {
  margin: 0;
  padding: 0;
  font-size: inherit;
  font-weight: normal;
}

ul {
  list-style: none;
}

button, select, input {
  font: inherit;
  font-feature-settings: inherit;
  color: inherit;
  margin: 0;
  padding: 0;
  border: 0;
  border-radius: 0;
  background: none;
  white-space: nowrap;
}

svg {
  display: block;
  flex: none;
}

.sprite {
  position: absolute;
  width: 0;
  height: 0;
}

.app {
  display: flex;
  flex-direction: column;
  height: 100vh;
  padding: 2px 4px 2px 3px;
}

.icon {
  width: 11px;
  height: 11px;
  margin: 0 1px;
}

.lit {
  background: #cfe6fb;
  outline: 1px solid #7fb5e8;
}

.dim {
  opacity: 0.4;
}

.sep {
  width: 1px;
  height: 10px;
  margin: 0 2px;
  background: #c4c4c4;
}

.caret,
.tri {
  flex: none;
  width: 0;
  height: 0;
  border: 2px solid transparent;
}

.caret,
.tri.down {
  border-top-color: #111;
  border-bottom: 0;
}

.tri.up {
  border-bottom-color: #111;
  border-top: 0;
}

.tri.left {
  border-right-color: #111;
  border-left: 0;
}

.tri.right {
  border-left-color: #111;
  border-right: 0;
}

/* title and menu */
.titlebar {
  display: flex;
  align-items: center;
  height: 12px;
  background: linear-gradient(#b4cbe4, #8fb1d7);
}

.titlebar h1 {
  flex: 1;
  margin-left: 3px;
  font-family: Roboto, "Noto Sans CJK JP", sans-serif;
  font-size: 8px;
  white-space: nowrap;
}

.window-buttons {
  display: flex;
  gap: 1px;
  margin-right: 4px;
}

.window-buttons button {
  width: 17px;
  height: 10px;
  border: 1px solid #7088a8;
  border-radius: 2px;
  background: #b3c7de;
}

.window-buttons svg {
  width: 15px;
  height: 8px;
}

.window-buttons .quit {
  background: #cc4a32;
}

.menubar {
  display: flex;
  align-items: center;
  gap: 9px;
  height: 15px;
  padding-left: 2px;
  background: #e0e0e0;
}

.menubar .icon {
  width: 12px;
  height: 12px;
  margin: 0 -4px;
}

.grip {
  width: 1px;
  height: 10px;
  border-left: 1px dotted #999;
}

.doc-buttons {
  display: flex;
  gap: 4px;
  margin-left: auto;
  margin-right: 5px;
}

.doc-buttons svg {
  width: 6px;
  height: 8px;
}

/* tabbed toolbars */
.ribbons,
.toolbar {
  display: flex;
  background: #e0e0e0;
}

.ribbons {
  height: 29px;
  gap: 2px;
  padding-top: 1px;
}

.ribbon {
  border-right: 1px solid #bbb;
  border-bottom: 1px solid #b0b0b0;
  border-radius: 2px;
  background: #ededed;
}

.ribbon-main {
  width: 193px;
}

.ribbon-model {
  width: 402px;
}

.ribbon-tabs {
  display: flex;
  height: 12px;
  padding: 1px 0 0 5px;
}

.ribbon-tabs button {
  padding: 0 3px;
  border-right: 1px solid #b5b5b5;
  color: #777;
  line-height: 9px;
}

.ribbon-model .ribbon-tabs button {
  padding: 0 4px;
}

.ribbon-tabs .on,
.tree-tabs .on {
  background: #fafafa;
  color: #111;
}

.tools {
  display: flex;
  align-items: center;
  height: 15px;
  background: linear-gradient(#fdfdfd, #ececec);
}

.ribbon .tools {
  padding-left: 8px;
}

.toolbar {
  gap: 2px;
  padding-bottom: 1px;
}

.toolbar .tools {
  padding: 0 3px;
  border-left: 1px dotted #999;
}

.toolbar .tools-file {
  width: 142px;
  padding-left: 5px;
}

.tools-file .caret {
  margin: 0 3px;
}

.combo {
  display: flex;
  align-items: center;
  gap: 3px;
  height: 11px;
  background: #fff;
  font-family: Roboto, sans-serif;
  font-size: 8px;
}

.node-combo {
  width: 68px;
  justify-content: flex-end;
}

.elem-combo {
  padding-left: 2px;
}

/* workspace */
.workspace {
  display: flex;
  flex: 1;
  min-height: 0;
  background: #e0e0e0;
}

.panel-head {
  display: flex;
  align-items: center;
  gap: 4px;
  height: 12px;
  padding: 0 3px;
  background: linear-gradient(#fafafa, #dadada);
}

.panel-head.active {
  background: linear-gradient(#b7d4f3, #98bfe9);
}

.panel-head h2 {
  flex: 1;
}

.panel-head svg {
  width: 6px;
  height: 6px;
}

.tree-panel {
  display: flex;
  flex-direction: column;
  width: 142px;
}

.tree-tabs {
  display: flex;
  height: 13px;
  padding-top: 2px;
  background: #e6e6e6;
}

.tree-tabs button {
  padding: 0 4px;
  border-right: 1px solid #bbb;
  color: #666;
}

.tree-box {
  display: grid;
  flex: 1;
  grid-template-columns: 1fr 10px;
  grid-template-rows: 1fr 10px;
  min-height: 0;
  background: #ece9e4;
}

.tree-clip {
  min-height: 0;
  overflow: hidden;
}

.tree {
  display: grid;
  grid-auto-rows: 1fr;
  height: calc(100% + 3px);
  font-family: "Liberation Sans", "Noto Sans CJK JP", sans-serif;
  background: linear-gradient(#d0cdc6, #d0cdc6) 6px 14px / 1px 100% no-repeat,
    linear-gradient(#d0cdc6, #d0cdc6) 18px 14px / 1px 100% no-repeat;
}

.tree li {
  display: flex;
  align-items: center;
  gap: 3px;
  min-height: 0;
  line-height: 10px;
  white-space: nowrap;
}

.tree svg {
  width: 10px;
  height: 10px;
}

.tree b {
  width: 6px;
  height: 6px;
  margin-right: 1px;
  border: 1px solid #aaa;
  background: #fff;
  font-size: 6px;
  line-height: 4px;
  text-align: center;
}

.tree .none {
  visibility: hidden;
}

.tree .l0 {
  padding-left: 1px;
}

.tree .l1 {
  padding-left: 3px;
}

.tree .l2 {
  padding-left: 15px;
}

.tree .l3 {
  padding-left: 37px;
}

.tree .long {
  font-size: 6px;
}

.tree .picked {
  background: #3399ff;
  color: #fff;
}

.vscroll,
.hscroll {
  display: flex;
  background: #f5f4f2;
}

.vscroll {
  flex-direction: column;
}

.vscroll button,
.hscroll button {
  display: flex;
  flex: none;
  align-items: center;
  justify-content: center;
  width: 10px;
  height: 10px;
  border: 1px solid;
  border-color: #fff #888 #888 #fff;
  background: #ece9e4;
}

.thumb {
  border: 1px solid;
  border-color: #fff #888 #888 #fff;
  background: #ece9e4;
}

.vscroll .thumb {
  height: 67%;
}

.hscroll .thumb {
  width: 54%;
}

.vscroll .end {
  margin-top: auto;
}

.hscroll .end {
  margin-left: auto;
}

.center {
  display: flex;
  flex: 1;
  flex-direction: column;
  min-width: 0;
  margin: 0 3px;
}

.doc-tabs {
  display: flex;
  align-items: center;
  height: 14px;
  padding-left: 3px;
  background: linear-gradient(#f4f4f4, #e4e4e4);
}

.doc-tab {
  display: flex;
  align-items: center;
  gap: 4px;
  height: 13px;
  padding: 0 2px 0 17px;
  background: linear-gradient(125deg, transparent 8px, #888 8px, #888 9px, #f0f0f0 9px);
  font-family: Roboto, "Noto Sans CJK JP", sans-serif;
  font-size: 8px;
}

.doc-tab.on {
  gap: 3px;
  padding: 0 6px 0 7px;
  border-right: 1px solid #999;
  background: linear-gradient(125deg, transparent 4px, #888 4px, #888 5px, #fff 5px);
  font-size: 7px;
  font-weight: bold;
}

.doc-tabs-end {
  display: flex;
  align-items: center;
  gap: 6px;
  margin-left: auto;
  margin-right: 2px;
}

.doc-tabs-end svg {
  width: 6px;
  height: 6px;
}

.viewport {
  flex: 1;
  min-height: 0;
  border: 1px solid #666;
  outline: 1px solid #fff;
  background: linear-gradient(#a4a4a4, #565656);
}

/* the arrow starts over the tree panel */
.model {
  position: relative;
  z-index: 2;
  width: 100%;
  height: 100%;
  overflow: visible;
}

.note-blue {
  fill: #0606d8;
  font-size: 17px;
}

.note-blue.bold {
  font-size: 13px;
  font-weight: bold;
}

.note-red {
  fill: #f00;
  font-size: 17px;
}

.note-red.small {
  font-size: 12px;
}

.message-panel {
  margin-top: 4px;
}

.message-panel .panel-head {
  height: 13px;
}

.message-log {
  display: flex;
  justify-content: space-between;
  height: 36px;
  padding: 1px 2px 2px;
  border-top: 2px solid #777;
  border-bottom: 1px solid #777;
  border-left: 1px solid #777;
  background: #ece9e4;
}

.message-log p {
  font-size: 8px;
}

.faint-scroll {
  display: flex;
  flex-direction: column;
  justify-content: space-between;
  padding: 3px 2px;
  opacity: 0.5;
}

.prompt {
  height: 13px;
  padding-left: 2px;
  border-left: 1px solid #777;
  background: #ece9e4;
}

.sheet-tabs {
  display: flex;
  height: 11px;
  background: #f0efed;
}

.nav {
  display: flex;
  align-items: center;
  justify-content: center;
  width: 10px;
  height: 10px;
  border-right: 1px solid #999;
  border-bottom: 1px solid #999;
  background: #e4e2de;
}

.nav .tri {
  opacity: 0.4;
}

.sheet {
  padding: 0 7px;
  border-right: 1px solid #444;
  border-bottom: 1px solid #888;
  line-height: 9px;
}

.sheet.on {
  padding: 0 4px 0 8px;
  background: #fff;
  font-weight: bold;
}

.sheet-tabs .hscroll {
  width: 33%;
  margin-left: auto;
  border-left: 1px solid #555;
}

.sheet-tabs .thumb {
  width: 10px;
}

/* task pane */
.task-panel {
  display: flex;
  flex-direction: column;
  width: 125px;
  background: #d3cfc7;
}

.task-nav {
  display: flex;
  align-items: center;
  height: 13px;
  padding: 0 4px 0 1px;
  background: linear-gradient(#fcfcfc, #ececec);
}

.task-nav .icon {
  width: 10px;
  height: 10px;
}

.task-nav span {
  flex: 1;
  margin-left: 4px;
  color: #111;
}

.task-body {
  display: flex;
  flex-direction: column;
  gap: 5px;
  padding: 5px 4px 0 6px;
}

.card {
  background: #f5f4f2;
}

.card h3 {
  display: flex;
  align-items: center;
  justify-content: space-between;
  height: 11px;
  padding: 0 6px 0 2px;
  background: linear-gradient(90deg, #fff, #dedede);
  color: #1b8cf0;
  font-size: 8px;
  font-weight: bold;
}

.gray h3 {
  background: #c6c4c0;
  color: #fff;
}

.card-in {
  padding: 2px 4px;
}

select {
  appearance: none;
  background: #fff conic-gradient(from 315deg at 50% 100%, #111 90deg, transparent 0) right 3px center / 6px 3px no-repeat;
}

.card select {
  display: block;
  width: 105px;
  height: 11px;
  padding-left: 2px;
  border: 1px solid #777;
  line-height: 9px;
}

.about {
  display: flex;
  gap: 3px;
  line-height: 8px;
  white-space: nowrap;
}

.box {
  flex: none;
  width: 9px;
  height: 9px;
  border: 1px solid #3a9c48;
  background: #fff;
}

.card ul {
  padding: 0 0 1px 4px;
}

.card li {
  display: flex;
  align-items: center;
  gap: 3px;
  height: 12px;
}

.card li svg {
  width: 9px;
  height: 9px;
}

.card a {
  color: #111;
  text-decoration: none;
  white-space: nowrap;
}

.card .off a {
  color: #999;
}

/* right icon strip */
.side-tools {
  width: 14px;
  margin-left: 1px;
  padding-top: 2px;
}

.side-group {
  display: flex;
  flex-direction: column;
  align-items: center;
  gap: 2px;
  padding: 2px 0 3px;
  border-top: 1px dotted #999;
  border-right: 1px solid #bbb;
  background: linear-gradient(90deg, #fcfcfc, #e8e8e8);
}

.bar {
  width: 9px;
  height: 1px;
  margin: 1px 0;
  background: #bbb;
}

.r90 {
  transform: rotate(90deg);
}

.r180 {
  transform: rotate(180deg);
}

.r270 {
  transform: rotate(270deg);
}

.statusbar {
  display: flex;
  align-items: center;
  height: 12px;
  gap: 3px;
  background: #f0eeeb;
  white-space: nowrap;
}

.help {
  width: 277px;
  padding-left: 2px;
}

.elem {
  width: 44px;
}

.ucs {
  width: 102px;
}

.ucs,
.gcs,
.elem {
  font-size: 8px;
}

.gcs {
  flex: 1;
}

.statusbar select {
  height: 11px;
  padding-left: 1px;
  border: 1px solid #888;
  line-height: 9px;
}

.unit {
  width: 28px;
}

.statusbar .mode {
  width: 27px;
  background-position: right 1px center;
}

.flat {
  display: flex;
  align-items: center;
  justify-content: center;
  width: 11px;
  height: 11px;
  border: 1px solid #bbb;
  background: #ddd;
  color: #999;
}

.query {
  width: 11px;
  height: 11px;
  border: 1px solid #2aa;
  background: #d8ffff;
}

.cyan {
  width: 11px;
  height: 11px;
  background: #00f0ff;
}

.spin {
  display: flex;
  flex-direction: column;
  align-items: flex-end;
  justify-content: space-between;
  width: 14px;
  height: 10px;
  padding: 2px;
  border: 1px solid #ccc;
}

.spin .tri {
  opacity: 0.5;
}

.count {
  width: 14px;
  height: 11px;
  background: #fff;
  text-align: center;
}
```
